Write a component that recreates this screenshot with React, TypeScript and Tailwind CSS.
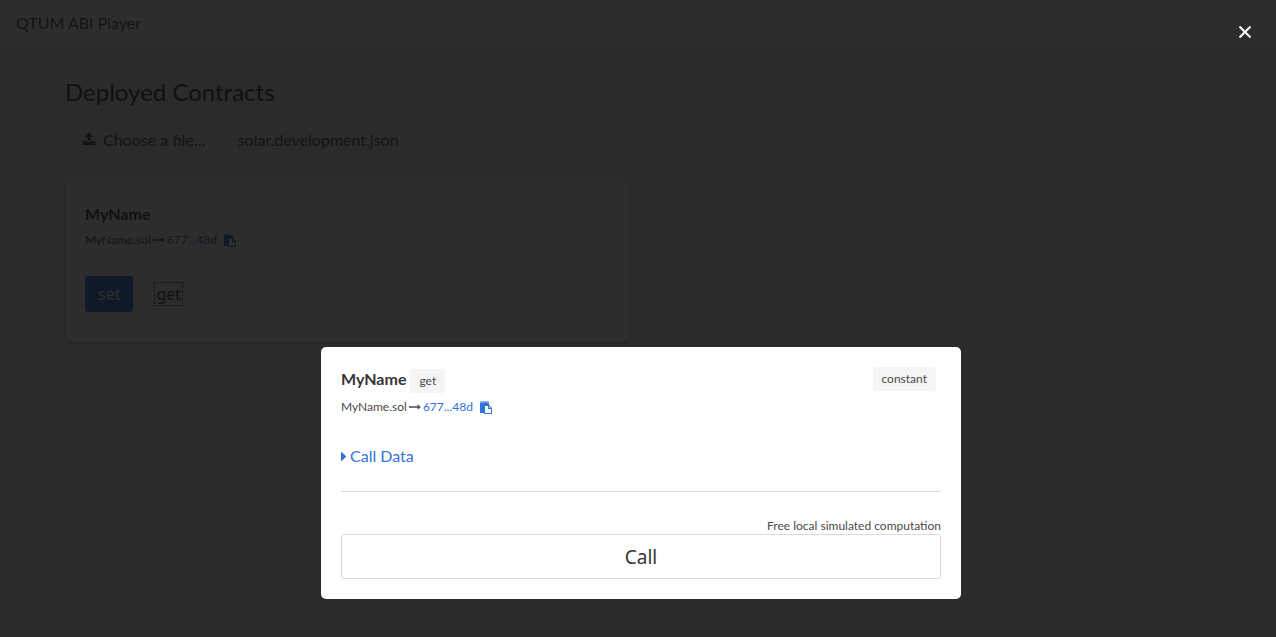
import React from "react";

type IconProps = { className: string };

function UploadIcon({ className }: IconProps) {
  return (
    <svg viewBox="0 0 1792 1792" fill="currentColor" className={className} aria-hidden="true">
      <path d="M1344 1472q0-26-19-45t-45-19-45 19-19 45 19 45 45 19 45-19 19-45zm256 0q0-26-19-45t-45-19-45 19-19 45 19 45 45 19 45-19 19-45zm128-224v320q0 40-28 68t-68 28h-1472q-40 0-68-28t-28-68v-320q0-40 28-68t68-28h427q21 56 70.5 92t110.5 36h256q61 0 110.5-36t70.5-92h427q40 0 68 28t28 68zm-325-648q-17 40-59 40h-256v448q0 26-19 45t-45 19h-256q-26 0-45-19t-19-45v-448h-256q-42 0-59-40-17-39 14-69l448-448q18-19 45-19t45 19l448 448q31 30 14 69z" />
    </svg>
  );
}

function ArrowIcon({ className }: IconProps) {
  return (
    <svg viewBox="0 0 1792 1792" fill="currentColor" className={className} aria-hidden="true">
      <path d="M1728 893q0 14-10 24l-384 354q-16 14-35 6-19-9-19-29v-224h-1248q-14 0-23-9t-9-23v-192q0-14 9-23t23-9h1248v-224q0-21 19-29t35 5l384 350q10 10 10 23z" />
    </svg>
  );
}

function PasteIcon({ className }: IconProps) {
  return (
    <svg viewBox="0 0 12 13" fill="currentColor" className={className} aria-hidden="true">
      <path opacity="0.55" d="M0 0.4Q0 0 0.4 0H8.6Q9 0 9 0.4V2H0Z" />
      <path d="M0 2H1.5V1.5H7.5V2H9V4H4V12H0.5Q0 12 0 11.5Z" />
      <path fillRule="evenodd" d="M4 4H9L12 7V13H4ZM5 5V12H11V8H8V5ZM9 5.4V7H10.6Z" />
    </svg>
  );
}

function CaretIcon({ className }: IconProps) {
  return (
    <svg viewBox="576 384 576 1024" fill="currentColor" className={className} aria-hidden="true">
      <path d="M1152 896q0 26-19 45l-448 448q-19 19-45 19t-45-19-19-45v-896q0-26 19-45t45-19 45 19l448 448q19 19 19 45z" />
    </svg>
  );
}

function ContractSource() {
  return (
    <p className="flex h-6 items-center text-xs text-[#4a4a4a]">
      MyName.sol
      <ArrowIcon className="mx-0.5 size-3" />
      <a href="#address" className="text-[#3273dc]">677...48d</a>
      <button type="button" aria-label="Copy address" className="ml-[7px] text-[#3273dc]">
        <PasteIcon className="h-[13px] w-3" />
      </button>
    </p>
  );
}

export default function App() {
  return (
    <div className="min-h-screen bg-[#f0f0f0] font-['Lato',sans-serif] text-base text-[#4a4a4a]">
      <nav className="flex h-12 items-start bg-white px-4 pt-[11px]">
        <a href="#home">QTUM ABI Player</a>
      </nav>

      <main className="px-[65px] pt-7">
        <div className="max-w-[564px]">
          <h1 className="text-2xl leading-8 text-[#363636]">Deployed Contracts</h1>

          <label className="mt-[13px] flex h-9 cursor-pointer rounded-[3px] border border-[#dbdbdb]">
            <input type="file" className="sr-only" />
            <span className="flex items-center border-r border-[#dbdbdb] pl-4 pr-[15px] pt-0.5">
              <UploadIcon className="mb-0.5 mr-[7px] size-3.5" />
              Choose a file…
            </span>
            <span className="flex items-center px-4 pt-0.5">solar.development.json</span>
          </label>

          <section className="mt-6 rounded-[5px] bg-white px-5 pb-[30px] pt-[21px] shadow-[0_2px_3px_rgba(10,10,10,0.1),0_0_0_1px_rgba(10,10,10,0.1)]">
            <h2 className="font-bold leading-6 text-[#363636]">MyName</h2>
            <div className="mt-0.5">
              <ContractSource />
            </div>
            <div className="mt-6 flex gap-[10px] font-['Noto_Sans',sans-serif]">
              <button type="button" className="h-9 rounded-[3px] bg-[#3273dc] px-[13px] text-white">set</button>
              <button type="button" className="h-9 rounded-[3px] bg-[#f5f5f5] px-[11px] text-[#363636]">
                <span className="block border border-dotted border-[#363636] px-px leading-[22px]">get</span>
              </button>
            </div>
          </section>
        </div>
      </main>

      <div className="fixed inset-0 flex items-end justify-center bg-[rgba(10,10,10,0.86)] pb-[38px] pl-[6px]">
        <div role="dialog" aria-label="MyName get" className="w-full max-w-[640px] rounded-[5px] bg-white p-5">
          <div className="flex items-start justify-between pr-[5px]">
            <div className="flex items-start gap-1">
              <h2 className="font-bold leading-6 text-[#363636]">MyName</h2>
              <span className="mt-0.5 rounded-[3px] bg-[#f5f5f5] px-[9px] text-xs leading-6">get</span>
            </div>
            <span className="rounded-[3px] bg-[#f5f5f5] px-[9px] text-xs leading-6">constant</span>
          </div>
          <div className="mt-0.5">
            <ContractSource />
          </div>

          <a href="#call-data" className="mt-[25px] flex items-center gap-1 leading-6 text-[#3273dc]">
            <CaretIcon className="h-[9px] w-[5px]" />
            Call Data
          </a>

          <hr className="mb-[26px] mt-[23px] border-[#dbdbdb]" />

          <p className="text-right text-xs leading-4">Free local simulated computation</p>
          <button
            type="button"
            className="block h-[45px] w-full rounded-[3px] border border-[#dbdbdb] pt-px font-['Noto_Sans',sans-serif] text-[19px] text-[#363636]"
          >
            Call
          </button>
        </div>

        <button type="button" aria-label="Close" className="absolute right-[15px] top-4 flex size-8 items-center justify-center text-white">
          <svg viewBox="0 0 12 12" className="size-3" stroke="currentColor" strokeWidth="2" aria-hidden="true">
            <path d="M0.5 0.5 11.5 11.5M11.5 0.5 0.5 11.5" />
          </svg>
        </button>
      </div>
    </div>
  );
}
